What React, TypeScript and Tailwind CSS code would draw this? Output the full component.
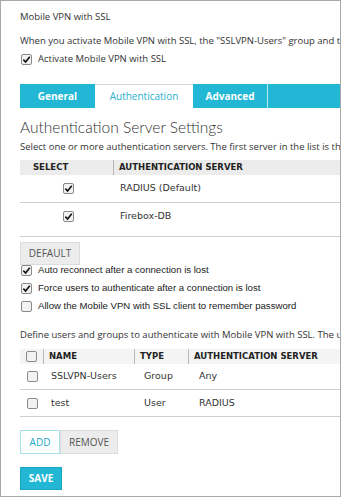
import React from 'react';

const teal = 'bg-[#22b8d5]';

const Check: React.FC<{ on?: boolean }> = ({ on }) => (
  <span className="inline-flex h-[11px] w-[11px] shrink-0 items-center justify-center rounded-[2px] border border-[#8a8a8a] bg-[#f2f2f2]">
    {on && (
      <svg viewBox="0 0 10 10" className="h-[9px] w-[9px]">
        <path d="M1.5 5.2 L4 7.8 L8.6 2" fill="none" stroke="#111" strokeWidth="1.8" />
      </svg>
    )}
  </span>
);

const ServerRow: React.FC<{ name: string; h: string }> = ({ name, h }) => (
  <div className={`flex border-b border-[#cfcfcf] ${h}`}>
    <div className="flex w-[94px] items-center justify-center pl-[2px]">
      <Check on />
    </div>
    <div className="flex items-center pl-[6px] text-[9.5px] text-[#333]">{name}</div>
  </div>
);

const UserRow: React.FC<{ name: string; type: string; server: string; h: string }> = ({ name, type, server, h }) => (
  <div className={`flex border-b border-[#cfcfcf] ${h} text-[9.5px] text-[#333]`}>
    <div className="flex w-[24px] items-center justify-center">
      <Check />
    </div>
    <div className="flex w-[91px] items-center pl-[7px]">{name}</div>
    <div className="flex w-[54px] items-center pl-[9px]">{type}</div>
    <div className="flex items-center pl-[10px]">{server}</div>
  </div>
);

export default function App() {
  return (
    <div className="h-[497px] w-[341px] overflow-hidden border border-[#a8a8a8] bg-white">
      <div className="w-[700px] whitespace-nowrap pl-[19px] pt-[9px]" style={{ fontFamily: '"Open Sans", sans-serif' }}>
        <div className="text-[9.5px] leading-[14px] text-[#333]">Mobile VPN with SSL</div>
        <div className="mt-[10px] text-[9.5px] leading-[14px] text-[#333]">
          When you activate Mobile VPN with SSL, the "SSLVPN-Users" group and the "Allow SSLVPN-Users" policy are created.
        </div>
        <label className="mt-[4px] flex items-center gap-[6px] pl-[1px] text-[9.5px] leading-[14px] text-[#333]">
          <Check on />
          <span>Activate Mobile VPN with SSL</span>
        </label>

        <div className={`mt-[18px] flex h-[24px] w-[321px] ${teal}`}>
          <div className="flex w-[75px] items-center justify-center text-[10px] font-bold text-white">General</div>
          <div className="flex w-[98px] items-center justify-center border-t border-[#d8d8d8] bg-white text-[10px] text-[#2ab0cc]">
            Authentication
          </div>
          <div className="flex w-[75px] items-center justify-center border-r border-[#bfe8f1] text-[10px] font-bold text-white">
            Advanced
          </div>
          <div className="flex-1" />
        </div>

        <div className="mt-[8px] text-[15.5px] font-light leading-[22px] text-[#333]" style={{ fontFamily: 'Lato, sans-serif' }}>
          Authentication Server Settings
        </div>
        <div className="mt-[2px] text-[9.5px] leading-[14px] text-[#333]">
          Select one or more authentication servers. The first server in the list is the default server.
        </div>

        <div className="mt-[6px]" style={{ fontFamily: '"DejaVu Sans", Verdana, sans-serif' }}>
          <div className="flex h-[15px] bg-[#ececec] text-[8.5px] font-bold text-[#222]">
            <div className="flex w-[94px] items-center border-r border-[#b8b8b8] pl-[13px]">SELECT</div>
            <div className="flex items-center pl-[5px]">AUTHENTICATION SERVER</div>
          </div>
          <ServerRow name="RADIUS (Default)" h="h-[28px]" />
          <div className="flex h-[34px] border-b border-[#cfcfcf] pb-[6px]">
            <div className="flex w-[94px] items-center justify-center pl-[2px]">
              <Check on />
            </div>
            <div className="flex items-center pl-[6px] text-[9.5px] text-[#333]">Firebox-DB</div>
          </div>
        </div>

        <button className="mt-[5px] block h-[23px] w-[60px] border border-[#dcdcdc] bg-[#ececec] text-[10px] text-[#555]">
          DEFAULT
        </button>

        <div
          className="mt-[-2px] flex flex-col gap-[4px] pl-[1px] text-[9.6px] leading-[14px] text-[#222]"
          style={{ fontFamily: '"Liberation Sans", Arial, sans-serif' }}
        >
          <label className="flex items-center gap-[6px]">
            <Check on />
            <span>Auto reconnect after a connection is lost</span>
          </label>
          <label className="flex items-center gap-[6px]">
            <Check on />
            <span>Force users to authenticate after a connection is lost</span>
          </label>
          <label className="flex items-center gap-[6px]">
            <Check />
            <span>Allow the Mobile VPN with SSL client to remember password</span>
          </label>
        </div>

        <div className="mt-[15px] text-[9.5px] leading-[14px] text-[#333]">
          Define users and groups to authenticate with Mobile VPN with SSL. The users and groups you select are added to the SSLVPN-Users group.
        </div>

        <div className="mt-[7px]" style={{ fontFamily: '"DejaVu Sans", Verdana, sans-serif' }}>
          <div className="flex h-[15px] bg-[#f4f4f4] text-[8.5px] font-bold text-[#222]">
            <div className="flex w-[24px] items-center justify-center border-r border-[#b8b8b8]">
              <Check />
            </div>
            <div className="flex w-[91px] items-center border-r border-[#b8b8b8] pl-[5px]">NAME</div>
            <div className="flex w-[54px] items-center border-r border-[#b8b8b8] pl-[5px]">TYPE</div>
            <div className="flex items-center pl-[5px]">AUTHENTICATION SERVER</div>
          </div>
          <UserRow name="SSLVPN-Users" type="Group" server="Any" h="h-[26px]" />
          <UserRow name="test" type="User" server="RADIUS" h="h-[27px]" />
        </div>

        <div className="mt-[13px] flex">
          <button className="h-[24px] w-[40px] border border-[#a8e0ec] bg-white text-[10px] text-[#22a8c8]">ADD</button>
          <button className="h-[24px] w-[58px] border border-[#dcdcdc] bg-[#ececec] text-[10px] text-[#555]">REMOVE</button>
        </div>

        <button className={`mt-[13px] block h-[23px] w-[42px] border border-[#1aa5c2] ${teal} text-[10px] font-bold text-white`}>
          SAVE
        </button>
      </div>
    </div>
  );
}
